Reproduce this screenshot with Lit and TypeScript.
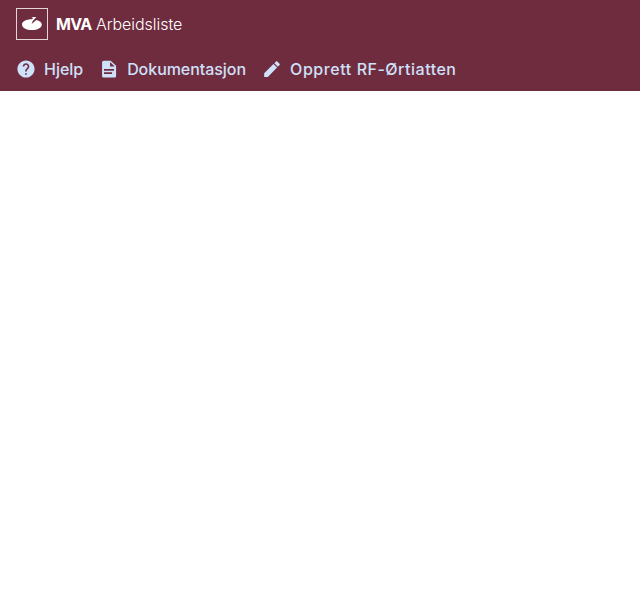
import { LitElement, html, css, svg } from "lit";
import { customElement } from "lit/decorators.js";

const links = [
  { label: [["Hjelp", "-.03px"]], path: "M12 1.700C6.300 1.700 1.700 6.300 1.700 12S6.300 22.300 12 22.300 22.300 17.700 22.300 12 17.700 1.700 12 1.700zm1 17.300h-2v-2h2v2zm2.070-7.750l-.9.920C13.450 12.900 13 13.500 13 15h-2v-.5c0-1.100.450-2.100 1.170-2.830l1.240-1.260c.370-.360.590-.860.590-1.410 0-1.100-.9-2-2-2s-2 .9-2 2H8c0-2.210 1.790-4 4-4s4 1.790 4 4c0 .880-.360 1.680-.930 2.250z" },
  { label: [["Dokumentasjon", "-.05px"]], path: "M14 2H5.700c-1.100 0-2 .9-2 2v16.300c0 1.100.9 2 2 2h12.800c1.100 0 2-.9 2-2V8.200L14 2zm1.700 16H6v-2h9.700zm2.300-4H6v-2h12zM13.300 9V3.500L18.800 9z" },
  { label: [["Opprett ", ".57px"], ["RF-Ørtiatten", ".5px"]], path: "M2.600 17.100V21.500H7L18.100 10.300l-4.400-4.400L2.600 17.100zM21.100 7.300c.450-.450.450-1.150 0-1.600l-2.700-2.700c-.450-.450-1.150-.450-1.600 0l-2 2 4.300 4.300z" },
];

@customElement("app-root")
export class AppRoot extends LitElement {
  static styles = css`
    :host { display: block; font-family: Inter, sans-serif; font-size: 16px; line-height: 24px; }
    header { box-sizing: border-box; height: 91px; background: #6f2c3f; }
    .brand { display: flex; align-items: center; gap: 8px; height: 48px; padding: 0 16px; color: #fff; }
    .logo { width: 32px; height: 32px; display: block; }
    .title { font-weight: 300; letter-spacing: -.04px; }
    .title b { font-weight: 700; letter-spacing: -.7px; }
    nav { display: flex; align-items: center; gap: 16px; height: 42px; padding: 0 16px; }
    .link { display: flex; align-items: center; gap: 8px; color: #cfe0f9; font-weight: 500; text-decoration: none; white-space: pre; }
    .icon { width: 20px; height: 20px; fill: currentColor; display: block; }
  `;

  render() {
    return html`
      <header>
        <div class="brand">
          <svg class="logo" viewBox="0 0 32 32" fill="none">
            <rect x=".5" y=".5" width="31" height="31" stroke="#fff" stroke-opacity=".8" />
            <path fill="#fff" d="M15.200 9H20.300L16.600 13.200L15.600 16L20.400 11.900C23.600 12.600 25.800 14.200 25.800 16.400C25.800 19.600 21.500 22 15.900 22S6 19.700 6 16.400C6 13.300 10.200 11.200 15.900 11.200L17.200 10Z" />
          </svg>
          <span class="title"><b>MVA</b> Arbeidsliste</span>
        </div>
        <nav>
          ${links.map((l) => html`<a class="link"><svg class="icon" viewBox="0 0 24 24">${svg`<path fill-rule="evenodd" d=${l.path} />`}</svg><span>${l.label.map(([word, spacing]) => html`<span style="letter-spacing:${spacing}">${word}</span>`)}</span></a>`)}
        </nav>
      </header>
    `;
  }
}
